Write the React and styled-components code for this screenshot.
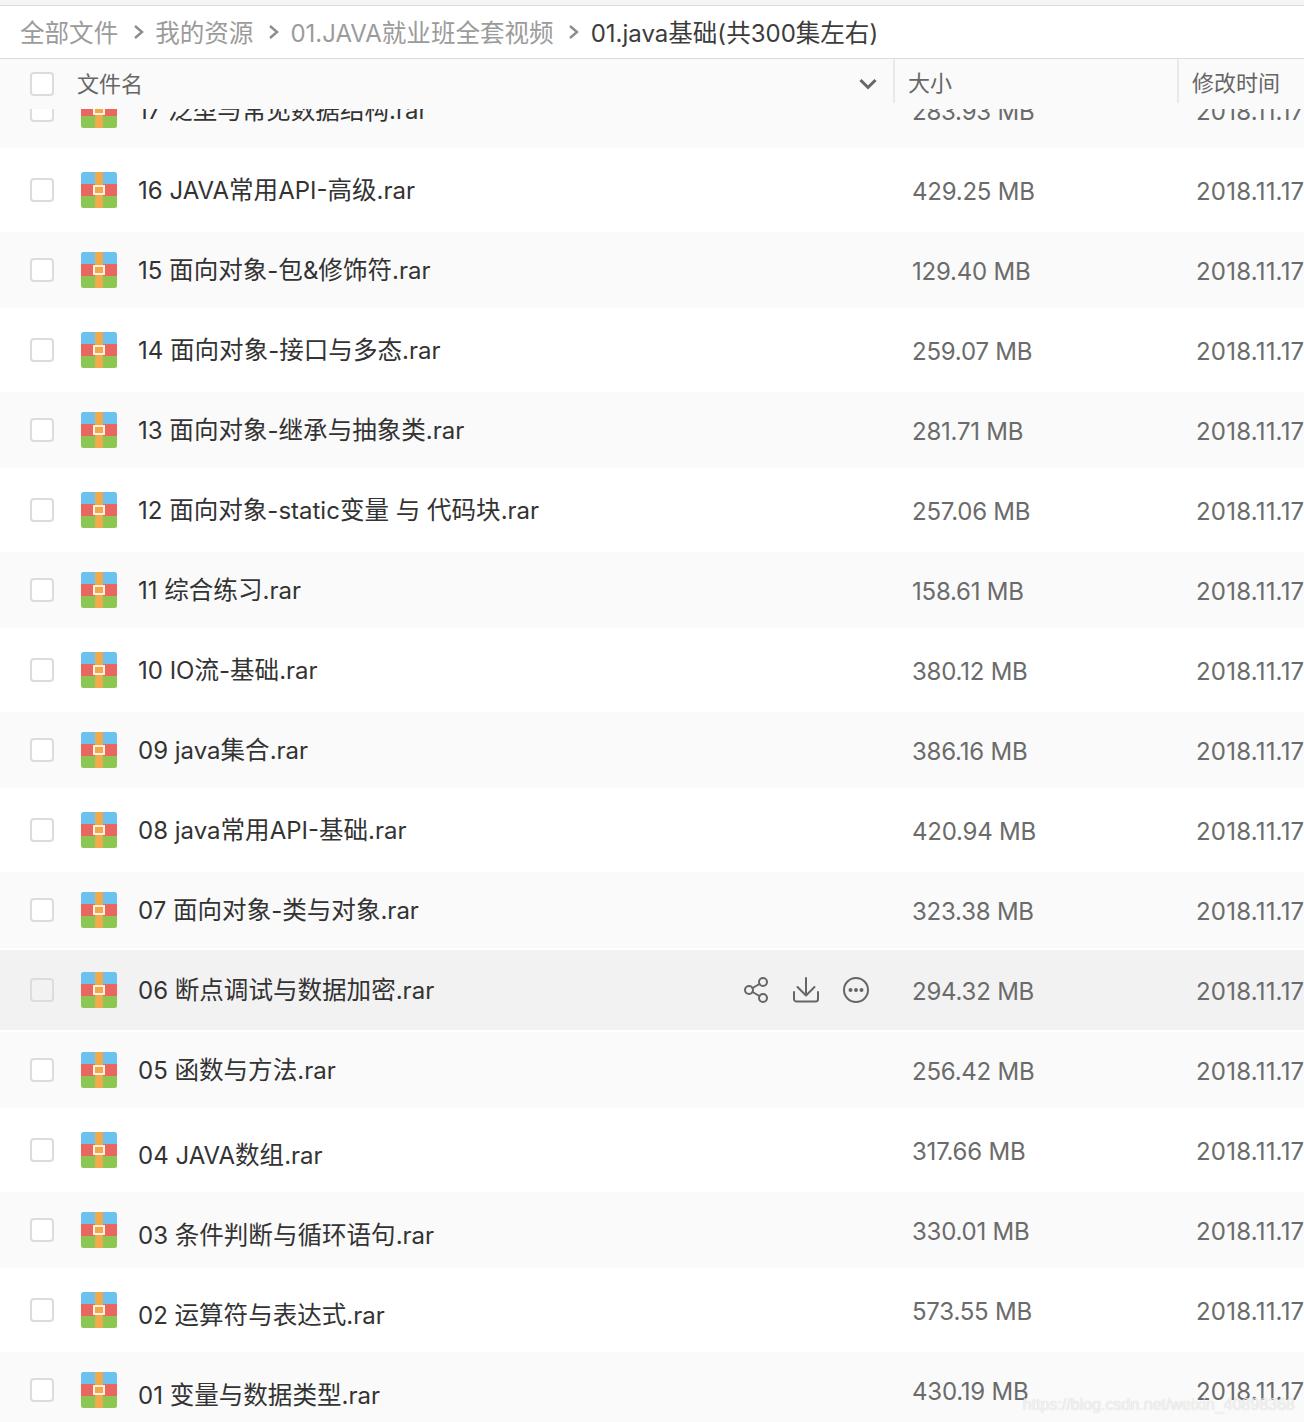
import React from 'react';
import styled, { createGlobalStyle } from 'styled-components';

const GlobalStyle = createGlobalStyle`
  html, body {
    margin: 0;
    padding: 0;
    background: #fff;
  }
  body {
    font-family: Inter, "Noto Sans CJK SC", sans-serif;
    overflow: hidden;
  }
`;

const Page = styled.div`
  position: relative;
  display: flex;
  flex-direction: column;
  width: 1304px;
  height: 1422px;
  overflow: hidden;
  background: #fff;
`;

const TopStrip = styled.div`
  flex: none;
  height: 5px;
  background: #f5f5f5;
  border-bottom: 1px solid #dcdcdc;
`;

const Breadcrumb = styled.nav`
  flex: none;
  display: flex;
  align-items: center;
  height: 52px;
  padding-left: 20px;
  border-bottom: 1px solid #dcdcdc;
  font-size: 24px;
  white-space: nowrap;
`;

const Crumb = styled.span`
  padding-bottom: 2px;
  color: ${(props) => (props.$current ? '#3c3c3c' : '#9b9b9b')};
`;

const CrumbArrow = styled.svg`
  flex: none;
  width: 11px;
  height: 16px;
  margin: 0 11.5px 0 14.5px;
  fill: none;
  stroke: #8c8c8c;
  stroke-width: 2.4;
`;

// CJK glyphs sit a touch wider than the latin ones in the reference
const Han = styled.span`
  font-size: 24.55px;
`;

const HeaderRow = styled.div`
  flex: none;
  display: flex;
  align-items: center;
  height: 50px;
  padding-left: 30px;
  background: #fafafa;
  font-size: 22px;
  color: #666;
  white-space: nowrap;
`;

const NameHead = styled.div`
  display: flex;
  align-items: center;
  width: 863px;
  box-sizing: border-box;
  padding-right: 16px;
`;

const HeadLabel = styled.span`
  flex: 1;
  margin-left: 23px;
  margin-top: -4px;
`;

const ColumnHead = styled.div`
  display: flex;
  align-items: center;
  width: ${(props) => props.$width}px;
  height: 44px;
  margin-top: -6px;
  box-sizing: border-box;
  padding-left: 13px;
  border-left: 2px solid #e9e9e9;
`;

const SortArrow = styled.svg`
  width: 18px;
  height: 12px;
  fill: none;
  stroke: #666;
  stroke-width: 3;
`;

const Box = styled.span`
  flex: none;
  display: block;
  width: 24px;
  height: 24px;
  box-sizing: border-box;
  border: 2px solid #dcdcdc;
  border-radius: 4px;
  background: ${(props) => (props.$hover ? '#f2f2f2' : '#fff')};
`;

const Scroller = styled.div`
  flex: 1;
  min-height: 0;
  overflow: hidden;
`;

const List = styled.div`
  margin-top: -39px;
`;

const Row = styled.div`
  display: grid;
  grid-template-columns: 51px 57px 774px 284px 108px;
  align-items: center;
  box-sizing: border-box;
  height: 80px;
  padding-left: 30px;
  border-block: 2px solid ${(props) => (props.$hover ? '#f2f2f2' : '#fff')};
  background: ${(props) =>
    props.$hover ? '#f2f2f2' : props.$odd ? '#fafafa' : '#fff'};
  font-size: 24px;
  white-space: nowrap;
  overflow: hidden;
`;

const NameCell = styled.div`
  display: flex;
  align-items: center;
  justify-content: space-between;
  padding-right: 43px;
  color: #333;
`;

const NameText = styled.span`
  padding: ${(props) => (props.$low ? '6px 0 0' : '0 0 4px')};
`;

const Actions = styled.div`
  display: flex;
  align-items: center;
  gap: 24px;
`;

const ActionIcon = styled.svg`
  display: block;
  width: 26px;
  height: 26px;
  fill: none;
  stroke: #666;
  stroke-width: 2;
  stroke-linecap: round;
  stroke-linejoin: round;
`;

const MetaCell = styled.div`
  padding-top: 2px;
  color: #6b6b6b;
  letter-spacing: ${(props) => (props.$date ? '0.2px' : '-0.22px')};
`;

const Watermark = styled.div`
  position: absolute;
  right: 9px;
  bottom: 8px;
  font-family: "Liberation Sans", sans-serif;
  font-size: 16px;
  color: rgba(255, 255, 255, 0.75);
  text-shadow: 0 0 1px rgba(0, 0, 0, 0.22);
  white-space: nowrap;
`;

const files = [
  { name: '17 泛型与常见数据结构.rar', size: '283.93 MB' },
  { name: '16 JAVA常用API-高级.rar', size: '429.25 MB' },
  { name: '15 面向对象-包&修饰符.rar', size: '129.40 MB' },
  { name: '14 面向对象-接口与多态.rar', size: '259.07 MB' },
  { name: '13 面向对象-继承与抽象类.rar', size: '281.71 MB' },
  { name: '12 面向对象-static变量 与 代码块.rar', size: '257.06 MB' },
  { name: '11 综合练习.rar', size: '158.61 MB' },
  { name: '10 IO流-基础.rar', size: '380.12 MB' },
  { name: '09 java集合.rar', size: '386.16 MB' },
  { name: '08 java常用API-基础.rar', size: '420.94 MB' },
  { name: '07 面向对象-类与对象.rar', size: '323.38 MB' },
  { name: '06 断点调试与数据加密.rar', size: '294.32 MB', hover: true },
  { name: '05 函数与方法.rar', size: '256.42 MB' },
  { name: '04 JAVA数组.rar', size: '317.66 MB', low: true },
  { name: '03 条件判断与循环语句.rar', size: '330.01 MB', low: true },
  { name: '02 运算符与表达式.rar', size: '573.55 MB', low: true },
  { name: '01 变量与数据类型.rar', size: '430.19 MB', low: true },
];

const Mixed = ({ text }) =>
  text
    .split(/([\u4e00-\u9fff]+)/)
    .map((part, i) => (i % 2 ? <Han key={i}>{part}</Han> : part));

const RarIcon = () => (
  <svg width="36" height="36" viewBox="0 0 36 36">
    <defs>
      <clipPath id="rar-corners">
        <rect width="36" height="36" rx="2.5" />
      </clipPath>
    </defs>
    <g clipPath="url(#rar-corners)">
      <rect width="36" height="12" fill="#6cc1ef" />
      <rect y="12" width="36" height="12" fill="#e9675f" />
      <rect y="24" width="36" height="12" fill="#8cc653" />
      <rect x="14" width="8" height="36" fill="#f0aa4c" />
    </g>
    <rect x="13" y="14" width="10" height="8" fill="#f0aa4c" stroke="#fdf3df" strokeWidth="2" />
  </svg>
);

const ShareIcon = () => (
  <ActionIcon viewBox="0 0 26 26">
    <circle cx="20" cy="5" r="4" />
    <circle cx="6" cy="13" r="4" />
    <circle cx="20" cy="21" r="4" />
    <path d="M9.5 11 16.5 7M9.5 15 16.5 19" />
  </ActionIcon>
);

const DownloadIcon = () => (
  <ActionIcon viewBox="0 0 26 26">
    <path d="M13 1v17M4.5 10l8.500 8.500 8.500-8.500" />
    <path d="M1 15v7a2.500 2.500 0 0 0 2.500 2.500h19A2.500 2.500 0 0 0 25 22v-7" />
  </ActionIcon>
);

const MoreIcon = () => (
  <ActionIcon viewBox="0 0 26 26">
    <circle cx="13" cy="13" r="12" />
    <circle cx="7.500" cy="13" r="1" fill="#666" />
    <circle cx="13" cy="13" r="1" fill="#666" />
    <circle cx="18.500" cy="13" r="1" fill="#666" />
  </ActionIcon>
);

const Arrow = () => (
  <CrumbArrow viewBox="0 0 11 16">
    <path d="M2 2l7 6-7 6" />
  </CrumbArrow>
);

export default function App() {
  return (
    <Page>
      <GlobalStyle />
      <TopStrip />
      <Breadcrumb>
        <Crumb><Mixed text="全部文件" /></Crumb>
        <Arrow />
        <Crumb><Mixed text="我的资源" /></Crumb>
        <Arrow />
        <Crumb><Mixed text="01.JAVA就业班全套视频" /></Crumb>
        <Arrow />
        <Crumb $current><Mixed text="01.java基础(共300集左右)" /></Crumb>
      </Breadcrumb>
      <HeaderRow>
        <NameHead>
          <Box />
          <HeadLabel>文件名</HeadLabel>
          <SortArrow viewBox="0 0 18 12">
            <path d="M1.500 2 9 9.500 16.500 2" />
          </SortArrow>
        </NameHead>
        <ColumnHead $width={284}>大小</ColumnHead>
        <ColumnHead $width={127}>修改时间</ColumnHead>
      </HeaderRow>
      <Scroller>
        <List>
          {files.map((file, i) => (
            <Row key={file.name} $odd={i % 2 === 0} $hover={file.hover}>
              <Box $hover={file.hover} />
              <RarIcon />
              <NameCell>
                <NameText $low={file.low}><Mixed text={file.name} /></NameText>
                {file.hover && (
                  <Actions>
                    <ShareIcon />
                    <DownloadIcon />
                    <MoreIcon />
                  </Actions>
                )}
              </NameCell>
              <MetaCell>{file.size}</MetaCell>
              <MetaCell $date>2018.11.17</MetaCell>
            </Row>
          ))}
        </List>
      </Scroller>
      <Watermark>https://blog.csdn.net/weixin_40898368</Watermark>
    </Page>
  );
}
